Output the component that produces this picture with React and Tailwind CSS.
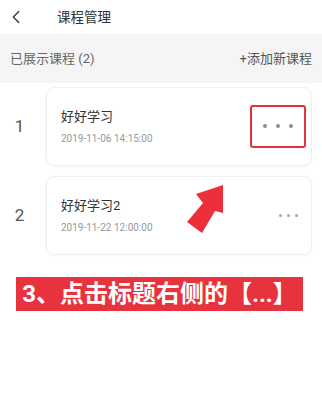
import { ChevronLeft } from 'lucide-react';

const courses = [
  { id: 1, title: '好好学习', time: '2019-11-06 14:15:00', highlighted: true },
  { id: 2, title: '好好学习2', time: '2019-11-22 12:00:00', highlighted: false },
];

function Dots({ big }) {
  if (big) {
    return (
      <div className="flex items-center justify-center gap-[9px] w-[56px] h-[43px] border-2 border-[#e0323c] rounded-[3px]">
        <span className="w-[4px] h-[4px] rounded-full bg-[#8c8c8c]" />
        <span className="w-[4px] h-[4px] rounded-full bg-[#8c8c8c]" />
        <span className="w-[4px] h-[4px] rounded-full bg-[#8c8c8c]" />
      </div>
    );
  }
  return (
    <div className="flex items-center gap-[5px] mr-[13px]">
      <span className="w-[3px] h-[3px] rounded-full bg-[#a8a8a8]" />
      <span className="w-[3px] h-[3px] rounded-full bg-[#a8a8a8]" />
      <span className="w-[3px] h-[3px] rounded-full bg-[#a8a8a8]" />
    </div>
  );
}

export default function App() {
  return (
    <div
      className="relative w-[322px] h-[406px] bg-white overflow-hidden"
      style={{ fontFamily: 'Roboto, "Noto Sans CJK SC", sans-serif' }}
    >
      <header className="h-[34px] flex items-center">
        <ChevronLeft className="ml-[5px] w-[22px] h-[22px] text-[#333]" strokeWidth={1.4} />
        <span className="ml-[30px] text-[13.5px] text-[#333]">课程管理</span>
      </header>

      <div className="h-[49px] bg-[#f5f5f5] flex items-center justify-between px-[10px] text-[13px] text-[#666]">
        <span>已展示课程 (2)</span>
        <span className="text-[#555]">+添加新课程</span>
      </div>

      <ul className="mt-[4px] flex flex-col gap-[10px]">
        {courses.map((c) => (
          <li key={c.id} className="flex items-center">
            <span className="w-[46px] pr-[7px] text-center text-[17px] text-[#555]">{c.id}</span>
            <div className="w-[266px] h-[79px] flex items-center justify-between rounded-lg border border-[#efefef] shadow-[0_1px_3px_rgba(0,0,0,0.04)]">
              <div className="pl-[14px] flex flex-col">
                <span className="text-[13px] leading-[18px] text-[#333]">{c.title}</span>
                <span className="mt-[6px] text-[10px] leading-[14px] text-[#999]">{c.time}</span>
              </div>
              {c.highlighted ? (
                <div className="mr-[5px] -mt-[1px]">
                  <Dots big />
                </div>
              ) : (
                <Dots />
              )}
            </div>
          </li>
        ))}
      </ul>

      <div className="mt-[22px] ml-[16px] w-[287px] h-[34px] bg-[#e8323e] flex items-center justify-center text-white text-[24px] font-bold">
        3、点击标题右侧的【...】
      </div>

      <svg className="absolute left-0 top-0" width="322" height="406" viewBox="0 0 322 406">
        <polygon
          points="223,185 223,213 215,211 202,233 187,222 203,203 196,194"
          fill="#ed2f3b"
        />
      </svg>
    </div>
  );
}
